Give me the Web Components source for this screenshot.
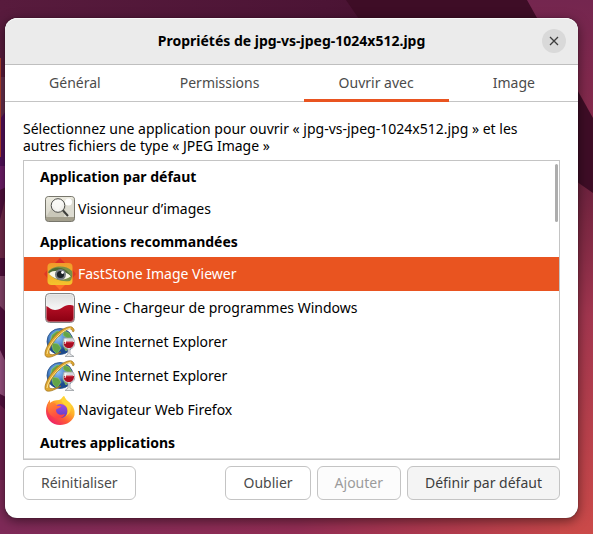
<!DOCTYPE html>
<html lang="fr">
<head>
<meta charset="utf-8">
<meta name="viewport" content="width=device-width, initial-scale=1">
<title>Propriétés de jpg-vs-jpeg-1024x512.jpg</title>
<style>
  html, body { margin: 0; height: 100%; }
  body { font: 14px/17px "Noto Sans", "Open Sans", sans-serif; color: #000; }
</style>
</head>
<body>
<desktop-area>
  <properties-dialog>
    <span slot="title">Propriétés de jpg-vs-jpeg-1024x512.jpg</span>
    <tab-button slot="tabs">Général</tab-button>
    <tab-button slot="tabs">Permissions</tab-button>
    <tab-button slot="tabs" active>Ouvrir avec</tab-button>
    <tab-button slot="tabs">Image</tab-button>
    <span slot="message">Sélectionnez une application pour ouvrir «&nbsp;jpg-vs-jpeg-1024x512.jpg&nbsp;» et les autres fichiers de type «&nbsp;JPEG Image&nbsp;»</span>
    <app-list>
      <app-heading>Application par défaut</app-heading>
      <app-row icon="viewer">Visionneur d’images</app-row>
      <app-heading>Applications recommandées</app-heading>
      <app-row icon="faststone" selected>FastStone Image Viewer</app-row>
      <app-row icon="wine">Wine - Chargeur de programmes Windows</app-row>
      <app-row icon="explorer">Wine Internet Explorer</app-row>
      <app-row icon="explorer">Wine Internet Explorer</app-row>
      <app-row icon="firefox">Navigateur Web Firefox</app-row>
      <app-heading>Autres applications</app-heading>
    </app-list>
    <action-button slot="start">Réinitialiser</action-button>
    <action-button slot="end">Oublier</action-button>
    <action-button slot="end" disabled>Ajouter</action-button>
    <action-button slot="end" emphasized>Définir par défaut</action-button>
  </properties-dialog>
</desktop-area>

<script>
const define = (name, render, setup) => customElements.define(name, class extends HTMLElement {
  connectedCallback() {
    if (this.shadowRoot) return;
    this.attachShadow({ mode: 'open' }).innerHTML = render(this);
    if (setup) setup(this);
  }
});

define('desktop-area', () => `
  <style>
    :host { display: flex; position: relative; box-sizing: border-box; height: 100vh; min-height: 400px; padding: 18px 15px 16px 5px; overflow: hidden; background: #4b1035; }
    svg { position: absolute; inset: 0; width: 100%; height: 100%; }
    ::slotted(*) { flex: 1; position: relative; min-width: 0; }
  </style>
  <svg viewBox="0 0 593 534" preserveAspectRatio="none" aria-hidden="true">
    <defs>
      <linearGradient id="t"><stop offset="0" stop-color="#581b3d"/><stop offset=".55" stop-color="#4c1435"/><stop offset="1" stop-color="#3e0d26"/></linearGradient>
      <linearGradient id="b"><stop offset="0" stop-color="#7e2a58"/><stop offset=".5" stop-color="#922d54"/><stop offset=".75" stop-color="#b03a4d"/><stop offset="1" stop-color="#cb4a49"/></linearGradient>
      <linearGradient id="r" x2="0" y2="1"><stop offset="0" stop-color="#67203c"/><stop offset=".4" stop-color="#a2364f"/><stop offset="1" stop-color="#cb4a49"/></linearGradient>
      <linearGradient id="p" x2="0" y2="1"><stop offset="0" stop-color="#74264f"/><stop offset="1" stop-color="#862a4c"/></linearGradient>
    </defs>
    <path fill="url(#t)" d="M0 0h593v110H0z"/>
    <path fill="#3e0d26" d="M346 0h181l66 115v80H480z"/>
    <path fill="url(#p)" d="M527 0h66v118z"/>
    <path fill="#67304f" d="M0 77h12v30l-12 14z"/>
    <path fill="#53105a" d="M0 119l12-16v96H0z"/>
    <path fill="#6f1d69" d="M0 166h12v16l-12 12z"/>
    <path fill="#51103d" d="M0 190l12-6v126H0z"/>
    <path fill="#732b4c" d="M0 220l5-20h7v58H0z"/>
    <path fill="#86456b" d="M0 276h12v40l-12-8z"/>
    <path fill="#54103f" d="M0 306l12 12v92H0z"/>
    <path fill="#9a5281" d="M0 350l12 25v25l-12-6z"/>
    <path fill="#70214f" d="M0 405l12 10v70H0z"/>
    <path fill="url(#b)" d="M0 480h593v54H0z"/>
    <path fill="url(#r)" d="M560 170l33 23v341h-33z"/>
    <path fill="#b03f2c" d="M0 58h1v99H0z"/>
  </svg>
  <slot></slot>`);

define('properties-dialog', () => `
  <style>
    :host { display: block; }
    section { display: flex; flex-direction: column; height: 100%; background: #fff; border-radius: 12px; box-shadow: 0 0 1px rgba(0,0,0,.7), 0 3px 12px rgba(0,0,0,.5); overflow: hidden; }
    header { display: grid; grid-template-columns: 36px 1fr 36px; align-items: center; height: 46px; background: #ebebeb; border-bottom: 1px solid #bfbfbf; border-radius: 12px 12px 0 0; box-shadow: inset 0 1px #f8f8f8; }
    h1 { grid-column: 2; margin: 0; font-size: 14px; line-height: 20px; font-weight: 700; text-align: center; white-space: nowrap; overflow: hidden; text-overflow: ellipsis; }
    .close { width: 24px; height: 24px; padding: 0; border: 0; border-radius: 50%; background: #d9d9d9; display: grid; place-items: center; }
    nav { display: flex; gap: 9px; padding: 0 8px 0 9px; height: 36px; border-bottom: 1px solid #c4c4c4; }
    ::slotted(tab-button) { flex: 1 1 auto; }
    main { flex: 1; min-height: 0; display: flex; flex-direction: column; padding: 18px; }
    p { margin: 0 0 6px; line-height: 17px; }
    footer { display: flex; gap: 6px; margin-top: 6px; }
    .end { display: flex; gap: 6px; margin-left: auto; }
  </style>
  <section role="dialog" aria-labelledby="title">
    <header>
      <h1 id="title"><slot name="title"></slot></h1>
      <button class="close" type="button" aria-label="Fermer">
        <svg width="10" height="10" viewBox="0 0 10 10" fill="none" stroke="#3d3d3d" stroke-width="1.3"><path d="M1 1l8 8M9 1L1 9"/></svg>
      </button>
    </header>
    <nav role="tablist"><slot name="tabs"></slot></nav>
    <main>
      <p><slot name="message"></slot></p>
      <slot></slot>
      <footer><slot name="start"></slot><div class="end"><slot name="end"></slot></div></footer>
    </main>
  </section>`);

define('tab-button', el => `
  <style>
    :host { display: flex; height: 37px; }
    button { flex: 1; padding: 0 0 3px; border: 0; background: none; font: inherit; color: #4b4b4b; }
    :host([active]) button { box-shadow: inset 0 -3px #e95420; }
  </style>
  <button type="button" role="tab" aria-selected="${el.hasAttribute('active')}"><slot></slot></button>`);

define('app-list', () => `
  <style>
    :host { display: flex; position: relative; flex: 1; min-height: 0; border: 1px solid #c4c4c4; background: #fff; }
    .rows { flex: 1; overflow-y: auto; scrollbar-width: none; }
    .thumb { position: absolute; top: 3px; right: 1px; width: 3px; height: 58px; border-radius: 2px; background: #adadad; }
    .edge { position: absolute; left: 0; right: 0; bottom: 0; height: 1px; background: #dedede; }
  </style>
  <div class="rows" role="listbox" aria-label="Applications" tabindex="0"><slot></slot></div>
  <div class="thumb"></div><div class="edge"></div>`);

define('app-heading', () => `
  <style>
    :host { display: block; padding: 6px 16px 5px; line-height: 20px; font-weight: 700; }
  </style><slot></slot>`);

const icons = {
  viewer: `<defs><linearGradient id="a" x2="0" y2="1"><stop stop-color="#ecebe0"/><stop offset="1" stop-color="#d6d4c8"/></linearGradient></defs>
    <rect x="1.5" y="3.5" width="29" height="25" rx="3" fill="#a39f8d" stroke="#77766c"/>
    <rect x="2" y="4" width="28" height="20" rx="2.500" fill="url(#a)"/>
    <path d="M2 24l7-11 5 5 5-8 11 14z" fill="#c9c7b9"/><path d="M20 24l3-18h7v18z" fill="#dddcd2"/>
    <circle cx="24.500" cy="9" r="3.500" fill="#fff"/>
    <circle cx="14" cy="12.500" r="6.800" fill="#fff" fill-opacity=".75" stroke="#4d4e4b"/>
    <path d="M19 17.500l5 5.500" stroke="#3c3d3a" stroke-width="2"/>`,
  faststone: `<defs><linearGradient id="a" x2="0" y2="1"><stop stop-color="#f09a2a"/><stop offset="1" stop-color="#f4c42c"/></linearGradient></defs>
    <path d="M16 0l6 6H10z" fill="#d92d26"/><path d="M0 16l5-6v12zM32 16l-5-6v12z" fill="#df3a24"/><path d="M16 32l6-6H10z" fill="#ff7027"/>
    <rect x="3.500" y="5" width="25" height="22" rx="4" fill="url(#a)"/>
    <path d="M4 14C9 7 22 7 28 13c1 4 0 8-2 10-8 1-17-1-22-9z" fill="#7a9046"/>
    <path d="M5 16c5-7 17-7 22 2-5 5-15 5-22-2z" fill="#f8f7e8"/>
    <path d="M4 15C9 7 22 8 28 19c-7-7-16-8-24-4z" fill="#4d6b34"/>
    <circle cx="16.500" cy="16.500" r="5.500" fill="#777d82"/><circle cx="16.500" cy="16.500" r="3.600" fill="#1b2226"/><circle cx="18.500" cy="14.500" r="1.400" fill="#fff"/>`,
  wine: `<defs><linearGradient id="a" x2="0" y2="1"><stop stop-color="#dcdcdc"/><stop offset=".5" stop-color="#f4f4f4"/></linearGradient><linearGradient id="b" x2="0" y2="1"><stop stop-color="#b80f26"/><stop offset="1" stop-color="#8a0012"/></linearGradient></defs>
    <rect x="1.500" y="1.500" width="29" height="29" rx="4" fill="url(#a)" stroke="#858585"/>
    <path d="M2 14c3 1 5 4 9 4 6 0 9-5 14-5 2 0 4 0 5 1v12q0 4-4 4H6q-4 0-4-4z" fill="url(#b)"/>
    <rect x="2.500" y="2.500" width="27" height="27" rx="3" fill="none" stroke="#fff" stroke-opacity=".35"/>`,
  explorer: `<defs><radialGradient id="a" cx=".4" cy=".35"><stop stop-color="#9cc7f5"/><stop offset=".55" stop-color="#5590d4"/><stop offset="1" stop-color="#1d4a8c"/></radialGradient></defs>
    <circle cx="16" cy="15.500" r="13" fill="url(#a)" stroke="#234e86" stroke-width=".8"/>
    <path d="M8 9l5-4 5 1-2 4-4 1-2 5-4 1zM20 5l5 2 3 5-4 1-5-4zM8 17l6 1 3 4-4 6-4-4zM20 14l5 1 2 4-5 6-3-6z" fill="#62a548" stroke="#9bca68" stroke-width=".6"/>
    <path d="M29 2c-3-4-14 2-21 11S-1 30 3 31s9-2 14-5C10 29 5 30 5 26c0-5 7-14 13-19S27 1 29 6c2-1 1-3 0-4z" fill="#dea630" stroke="#9c701a" stroke-width=".7"/>
    <path d="M27 2C19 3 4 18 3 28" fill="none" stroke="#ffe58f"/>
    <path d="M20 12h9c3 5 2 10-3 11v5l4 2.500h-9l3-2.500v-5c-5-1-6-6-4-11z" fill="#e4e5e8" fill-opacity=".9" stroke="#9ba0a4" stroke-width=".8"/>
    <path d="M20 16h10c0 4-2 6-5 6s-6-2-5-6z" fill="#aa0d23"/><path d="M21 16h8" stroke="#df4352"/><path d="M22 13l-1 5" stroke="#fff"/>`,
  firefox: `<defs><linearGradient id="a" x1=".85" y1=".1" x2=".2" y2=".95"><stop stop-color="#ffe23e"/><stop offset=".35" stop-color="#ffae2b"/><stop offset=".65" stop-color="#ff5a36"/><stop offset="1" stop-color="#ee2069"/></linearGradient><linearGradient id="b" x2="0" y2="1"><stop stop-color="#a04be0"/><stop offset="1" stop-color="#5a3fc4"/></linearGradient><linearGradient id="c" x2=".4" y2="1"><stop stop-color="#ff9a2c"/><stop offset="1" stop-color="#ff4545"/></linearGradient></defs>
    <path d="M20 2c1 3 4 5 6 7 4 4 5 7 4.500 12C29 27 23 31 16 31 8 31 2 25 2 17c0-4 1-8 4-11v3c2-2 5-3 9-3 2 0 3-3 5-4z" fill="url(#a)"/>
    <circle cx="16.500" cy="17" r="7" fill="url(#b)"/>
    <path d="M6 6v3c3-1 6 0 7 3h4c0 2-4 2-5 4 0 4 4 6 9 4-2 5-9 6-13 2C3 19 2 11 6 6z" fill="url(#c)"/>
    <path d="M20 2c-4 4-2 7 1 9s4 7 1 11c5-3 6-8 4-13-3-2-5-4-6-7z" fill="#ffd436"/>`
};

define('app-icon', el => `
  <style>:host { display: block; width: 32px; height: 32px; } svg { display: block; }</style>
  <svg width="32" height="32" viewBox="0 0 32 32" aria-hidden="true">${icons[el.getAttribute('name')]}</svg>`);

define('app-row', el => `
  <style>
    :host { display: flex; align-items: center; gap: 2px; height: 34px; padding-left: 20px; white-space: nowrap; outline: none; }
    :host([selected]) { background: #e95420; color: #fff; }
    span { padding-bottom: 2px; }
  </style>
  <app-icon name="${el.getAttribute('icon')}"></app-icon><span><slot></slot></span>`,
  el => { el.setAttribute('role', 'option'); el.setAttribute('aria-selected', el.hasAttribute('selected')); });

define('action-button', el => `
  <style>
    :host { display: block; }
    button { box-sizing: border-box; height: 34px; padding: 0 17px 2px; border: 1px solid #c4c4c4; border-radius: 6px; background: #fff; font: inherit; color: #4b4b4b; white-space: nowrap; }
    button:disabled { background: #fcfcfc; color: #9b9b9b; }
    :host([emphasized]) button { background: #f4f4f4; color: #3d3d3d; }
  </style>
  <button type="button" ${el.hasAttribute('disabled') ? 'disabled' : ''}><slot></slot></button>`);
</script>
</body>
</html>
